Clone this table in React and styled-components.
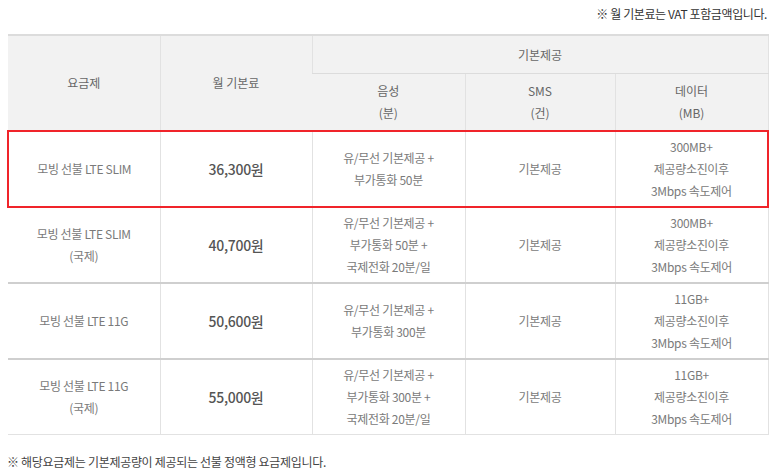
import React from "react";
import styled, { createGlobalStyle } from "styled-components";

const GlobalStyle = createGlobalStyle`
    body {
        margin: 0;
        background: #fff;
        font-family: "Noto Sans CJK KR", "Noto Sans", sans-serif;
        color: #666;
    }
`

const plans = [
    {
        name: ["모빙 선불 LTE SLIM"],
        price: "36,300원",
        voice: ["유/무선 기본제공 +", "부가통화 50분"],
        data: ["300MB+", "제공량소진이후", "3Mbps 속도제어"],
        active: true
    },
    {
        name: ["모빙 선불 LTE SLIM", "(국제)"],
        price: "40,700원",
        voice: ["유/무선 기본제공 +", "부가통화 50분 +", "국제전화 20분/일"],
        data: ["300MB+", "제공량소진이후", "3Mbps 속도제어"]
    },
    {
        name: ["모빙 선불 LTE 11G"],
        price: "50,600원",
        voice: ["유/무선 기본제공 +", "부가통화 300분"],
        data: ["11GB+", "제공량소진이후", "3Mbps 속도제어"]
    },
    {
        name: ["모빙 선불 LTE 11G", "(국제)"],
        price: "55,000원",
        voice: ["유/무선 기본제공 +", "부가통화 300분 +", "국제전화 20분/일"],
        data: ["11GB+", "제공량소진이후", "3Mbps 속도제어"]
    }
]

const Lines = ({ items }) => items.map((t, i) => <Line key={i}>{t}</Line>)

export default function App() {
    return (
        <Page>
            <GlobalStyle />
            <Notice>※ 월 기본료는 VAT 포함금액입니다.</Notice>
            <Table>
                <colgroup>
                    <col width="152" />
                    <col width="152" />
                    <col width="153" />
                    <col width="150" />
                    <col width="153" />
                </colgroup>
                <thead>
                    <tr>
                        <Th rowSpan={2}>요금제</Th>
                        <Th rowSpan={2}>월 기본료</Th>
                        <Th colSpan={3} $h={37}>기본제공</Th>
                    </tr>
                    <tr>
                        <Th $h={56}><Line>음성</Line><Line>(분)</Line></Th>
                        <Th $h={56}><Line>SMS</Line><Line>(건)</Line></Th>
                        <Th $h={56}><Line>데이터</Line><Line>(MB)</Line></Th>
                    </tr>
                </thead>
                <tbody>
                    {plans.map((p, i) => (
                        <Row key={i} $active={p.active}>
                            <Td><Lines items={p.name} /></Td>
                            <Td><Price>{p.price}</Price></Td>
                            <Td><Lines items={p.voice} /></Td>
                            <Td>기본제공</Td>
                            <Td><Lines items={p.data} /></Td>
                        </Row>
                    ))}
                </tbody>
            </Table>
            <Footnote>※ 해당요금제는 기본제공량이 제공되는 선불 정액형 요금제입니다.</Footnote>
        </Page>
    );
}

const Page = styled.div`
    width: 760px;
    padding: 6px 6px 0 7px;
`

const Notice = styled.p`
    margin: 0 0 12px;
    text-align: right;
    font-size: 12px;
    line-height: 16px;
    color: #333;
    letter-spacing: -0.4px;
`

const Table = styled.table`
    width: 760px;
    border-collapse: collapse;
    table-layout: fixed;
    border-top: 2px solid #dcdcdc;
    border-right: 1px solid #e2e2e2;
`

const Th = styled.th`
    height: ${p => (p.$h ? `${p.$h}px` : "auto")};
    padding: 0;
    background: #f2f2f2;
    border-left: 1px solid #e2e2e2;
    border-bottom: 1px solid #dcdcdc;
    font-size: 12px;
    font-weight: 400;
    line-height: 22px;
    color: #666;
    text-align: center;
    vertical-align: middle;
    &:first-child {
        border-left: none;
    }
`

const Td = styled.td`
    height: 74px;
    padding: 0;
    border-left: 1px solid #e2e2e2;
    border-bottom: 2px solid #cfcfcf;
    font-size: 12px;
    line-height: 22px;
    color: #7a7a7a;
    text-align: center;
    vertical-align: middle;
    letter-spacing: -0.3px;
    &:first-child {
        border-left: none;
    }
`

const Row = styled.tr`
    ${p => p.$active && `
        & > td {
            border-top: 2px solid #f0242a;
            border-bottom: 2px solid #f0242a;
        }
        & > td:first-child { border-left: 2px solid #f0242a; }
        & > td:last-child { border-right: 2px solid #f0242a; }
    `}
    &:last-child > td {
        border-bottom: 1px solid #e2e2e2;
    }
`

const Line = styled.span`
    display: block;
`

const Price = styled.span`
    font-size: 14px;
    font-weight: 500;
    color: #555;
    letter-spacing: -0.3px;
`

const Footnote = styled.p`
    margin: 19px 0 0;
    font-size: 12px;
    line-height: 16px;
    color: #444;
    letter-spacing: -0.3px;
`
